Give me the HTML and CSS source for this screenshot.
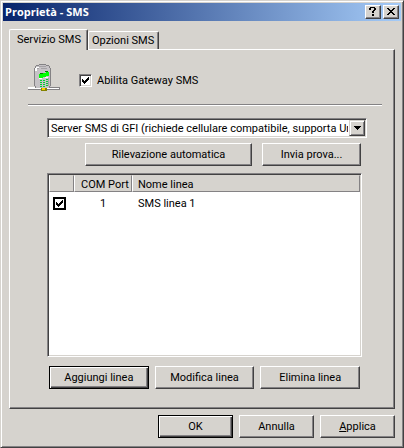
FILE: index.html
```html
<!DOCTYPE html>
<html lang="it">
<head>
  <meta charset="UTF-8">
  <meta name="viewport" content="width=device-width, initial-scale=1">
  <title>Proprietà - SMS</title>
  <link rel="stylesheet" href="styles.css">
</head>
<body>
  <div class="window">
    <header class="titlebar">
      <h1>Proprietà - SMS</h1>
      <button type="button" class="caption-btn" aria-label="Guida">
        <svg width="8" height="9" viewBox="0 0 8 9" shape-rendering="crispEdges"><path d="M1 0h5v1h1v2h-1v1h-1v2h-2v-2h1v-1h1v-2h-3v2h-2v-2h1zM3 7h2v2h-2z"/></svg>
      </button>
      <button type="button" class="caption-btn" aria-label="Chiudi">
        <svg width="8" height="7" viewBox="0 0 8 7" shape-rendering="crispEdges"><path d="M0 0h2v1h1v1h2v-1h1v-1h2v1h-1v1h-1v1h-1v1h1v1h1v1h1v1h-2v-1h-1v-1h-2v1h-1v1h-2v-1h1v-1h1v-1h1v-1h-1v-1h-1v-1h-1z"/></svg>
      </button>
    </header>

    <div class="content">
      <nav class="tabs" role="tablist">
        <button type="button" class="tab active" role="tab" aria-selected="true">Servizio SMS</button>
        <button type="button" class="tab" role="tab" aria-selected="false">Opzioni SMS</button>
      </nav>

      <main class="panel" role="tabpanel">
        <div class="enable">
          <!-- Cellulare -->
          <svg class="phone" width="32" height="28" viewBox="0 0 32 28" shape-rendering="crispEdges" aria-hidden="true">
            <path fill="#c6c3c6" d="M11 1h8v1h3v2h1v20h-16v-20h1v-2h3z"/>
            <path fill="#848284" d="M11 0h7v1h-7zM8 1h3v1h-3zM18 1h3v1h-3zM7 2h1v2h-1zM21 2h1v2h-1zM6 4h1v18h-1zM22 4h1v18h-1zM7 22h1v2h-1zM21 22h1v2h-1z"/>
            <path fill="#a5a2a5" d="M11 2h7v1h-7zM9 4h2v1h-2zM13 4h6v1h-6zM20 14h1v8h-1z"/>
            <path fill="#fff" d="M8 3h3v1h-3zM7 4h2v3h-2zM11 14h3v1h-3zM17 13h3v1h-3z"/>
            <path fill="#008200" d="M17 7h3v1h-3zM12 9h3v1h-3z"/>
            <path fill="#00ff00" d="M11 10h4v-1h3v-1h3v4h-3v1h-3v1h-4z"/>
            <path fill="#00cf31" d="M12 16h2v1h-2zM15 16h2v1h-2zM18 15h2v1h-2zM12 18h2v1h-2zM15 18h2v1h-2zM18 17h2v1h-2zM12 20h2v1h-2zM15 20h2v1h-2zM18 19h2v1h-2zM12 22h2v1h-2zM15 22h2v1h-2zM18 21h2v1h-2z"/>
            <path fill="#fff" d="M0 23h7v1h-7zM0 24h31v1h-31z"/>
            <path fill="#848284" d="M0 25h32v1h-32zM22 23h10v1h-10zM31 23h1v3h-1z"/>
            <path fill="#848200" d="M13 24h6v3h-6z"/>
            <path fill="#ffcf00" d="M14 24h3v2h-3z"/>
          </svg>
          <label class="check"><input type="checkbox" checked>Abilita Gateway SMS</label>
        </div>

        <hr>

        <div class="service">
          <div class="combo">
            <select aria-label="Servizio">
              <option>Server SMS di GFI (richiede cellulare compatibile, supporta Unicode)</option>
            </select>
            <span class="combo-arrow"><svg width="7" height="4" viewBox="0 0 7 4" shape-rendering="crispEdges"><path d="M0 0h7v1h-1v1h-1v1h-1v1h-1v-1h-1v-1h-1v-1h-1z"/></svg></span>
          </div>

          <div class="tests">
            <button type="button" class="btn detect">Rilevazione automatica</button>
            <button type="button" class="btn">Invia prova...</button>
          </div>

          <div class="list">
            <table>
              <thead>
                <tr>
                  <th class="col-check"></th>
                  <th class="col-port">COM Port</th>
                  <th>Nome linea</th>
                </tr>
              </thead>
              <tbody>
                <tr>
                  <td><input type="checkbox" class="row-check" aria-label="SMS linea 1" checked></td>
                  <td class="port">1</td>
                  <td>SMS linea 1</td>
                </tr>
              </tbody>
            </table>
          </div>

          <div class="line-actions">
            <button type="button" class="btn default">Aggiungi linea</button>
            <button type="button" class="btn">Modifica linea</button>
            <button type="button" class="btn">Elimina linea</button>
          </div>
        </div>
      </main>

      <footer class="buttons">
        <button type="button" class="btn default">OK</button>
        <button type="button" class="btn">Annulla</button>
        <button type="button" class="btn" accesskey="a"><u>A</u>pplica</button>
      </footer>
    </div>
  </div>
</body>
</html>
```

FILE: styles.css
```css
* { box-sizing: border-box; }
body {
  margin: 0;
  background-color: #d6d3ce;
  color: #000;
  font-family: Roboto, "Liberation Sans", Arial, sans-serif;
  font-size: 11px; line-height: 13px;
}
button, select, input { font: inherit; color: inherit; margin: 0; }
svg { display: block; flex: none; }

.window {
  display: flex; flex-direction: column;
  min-height: 100vh; padding: 1px 1px 0 0;
  border: 1px solid; border-color: #d6d3ce #424142 #424142 #d6d3ce;
  box-shadow: inset 1px 1px #fff, inset -1px -1px #848284;
}

/* Title bar */
.titlebar {
  display: flex; align-items: center; gap: 2px;
  height: 18px; margin: 1px 1px 0 2px; padding: 0 2px;
  background: linear-gradient(to right, #08246b, #a5cbf7);
}
.titlebar h1 {
  flex: 1; margin: 0;
  font-family: "Open Sans", Tahoma, sans-serif; font-size: 11px; line-height: 16px; font-weight: bold; color: #fff;
}
.caption-btn {
  display: flex; align-items: center; justify-content: center;
  width: 16px; height: 14px; padding: 0 1px 1px 0;
  background-color: #d6d3ce;
  border: 1px solid; border-color: #fff #424142 #424142 #fff;
  box-shadow: inset -1px -1px #848284;
}

.content {
  display: flex; flex-direction: column; flex: 1;
  padding: 8px 7px 9px 8px;
}

/* Tabs */
.tabs { display: flex; align-items: flex-end; height: 20px; }
.tab {
  height: 18px; padding: 0 4px 0 3px;
  background-color: #d6d3ce;
  border: 1px solid; border-color: #fff #424142 transparent #fff; border-bottom: 0;
  border-radius: 2px 2px 0 0;
  box-shadow: inset -1px 0 #848284;
  white-space: nowrap;
}
.tab.active { position: relative; height: 21px; margin-bottom: -1px; padding: 0 6px 1px 7px; }

.panel {
  display: flex; flex-direction: column; flex: 1;
  padding: 14px 12px 19px 18px;
  border: 1px solid; border-color: #fff #424142 #424142 #fff;
  box-shadow: inset -1px -1px #848284;
}
.enable { display: flex; align-items: center; gap: 19px; height: 32px; }
.phone { align-self: flex-start; }
.check { display: flex; align-items: center; gap: 5px; }
input[type="checkbox"] {
  appearance: none;
  width: 13px; height: 13px;
  background: #fff url("data:image/svg+xml,%3Csvg xmlns='http://www.w3.org/2000/svg' width='7' height='7' shape-rendering='crispEdges'%3E%3Cpath d='M0 2h1v1h1v1h1v-1h1v-1h1v-1h1v-1h1v3h-1v1h-1v1h-1v1h-1v1h-1v-1h-1v-1h-1z'/%3E%3C/svg%3E") no-repeat center;
  border: 1px solid; border-color: #848284 #fff #fff #848284;
  box-shadow: inset 1px 1px #424142, inset -1px -1px #d6d3ce;
}
input[type="checkbox"]:not(:checked) { background-image: none; }

hr {
  width: 100%; margin: 8px 0 12px;
  border: 0; border-top: 1px solid #848284; border-bottom: 1px solid #fff;
}

.service { display: flex; flex-direction: column; flex: 1; padding: 0 15px 0 19px; }

/* Combo box */
.combo { position: relative; }
.combo select {
  appearance: none;
  display: block; width: 100%; height: 20px; padding: 0 18px 0 3px;
  overflow: hidden; white-space: nowrap; text-overflow: clip;
  background-color: #fff;
  border: 1px solid; border-color: #848284 #fff #fff #848284; border-radius: 0;
  box-shadow: inset 1px 1px #424142, inset -1px -1px #d6d3ce;
}
.combo-arrow {
  position: absolute; top: 2px; right: 2px;
  display: flex; align-items: center; justify-content: center;
  width: 16px; height: 16px;
  background-color: #d6d3ce;
  border: 1px solid; border-color: #d6d3ce #424142 #424142 #d6d3ce;
  box-shadow: inset 1px 1px #fff, inset -1px -1px #848284;
  pointer-events: none;
}

/* Buttons */
.btn {
  flex: 1; height: 23px; padding: 0;
  background-color: #d6d3ce;
  border: 1px solid; border-color: #fff #424142 #424142 #fff; border-radius: 0;
  box-shadow: inset -1px -1px #848284;
  white-space: nowrap;
}
.btn.default {
  border-color: #000;
  box-shadow: inset 1px 1px #fff, inset -1px -1px #424142, inset -2px -2px #848284;
}

.tests { display: flex; gap: 10px; margin: 5px 6px 7px 38px; }
.tests .btn { flex: 98; }
.tests .detect { flex: 167; }

/* Line list */
.list {
  flex: 1; min-height: 80px; margin-right: 5px; padding: 1px;
  background-color: #fff;
  border: 1px solid; border-color: #848284 #fff #fff #848284;
  box-shadow: inset 1px 1px #424142, inset -1px -1px #d6d3ce;
}
table { width: 100%; table-layout: fixed; border-collapse: separate; border-spacing: 0; }
th {
  height: 17px; padding: 1px 5px 0;
  background-color: #d6d3ce;
  border: 1px solid; border-color: #d6d3ce #848284 #848284 #fff;
  font-weight: normal; text-align: left; white-space: nowrap;
}
.col-check { width: 25px; }
.col-port { width: 58px; padding-left: 6px; }
td { height: 22px; padding: 0 6px; }
td:first-child { padding: 0 4px; }
td input { display: block; }
td.port { text-align: center; }
input.row-check[type="checkbox"] { border: 2px solid #000; box-shadow: none; }

.line-actions { display: flex; gap: 6px; margin: 9px 7px 0 2px; }

.buttons { display: flex; justify-content: flex-end; gap: 6px; margin-top: 6px; }
.buttons .btn { flex: 0 0 75px; }
```
